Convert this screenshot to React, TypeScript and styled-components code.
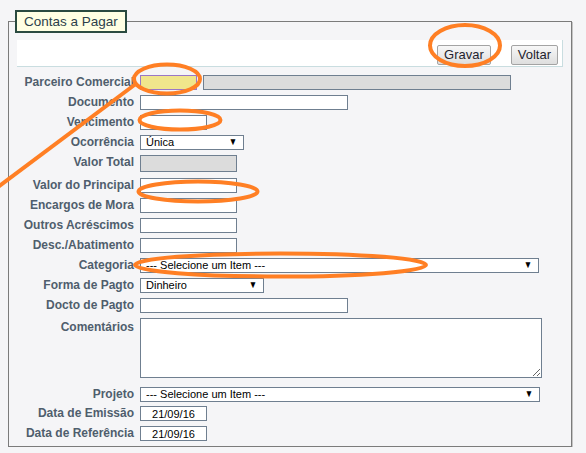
import React from "react";
import styled, { createGlobalStyle } from "styled-components";

const GlobalStyle = createGlobalStyle`
  html, body {
    background: #f5f5f7;
  }
  body {
    margin: 8px;
    font-family: "Liberation Sans", Arial, sans-serif;
  }
`;

interface RowSpec {
  label: string;
  h: number;
  top?: boolean;
  control: React.ReactNode;
}

const Select: React.FC<{ w: number; value: string }> = ({ w, value }) => (
  <SelectWrap $w={w}>
    <SelectBox defaultValue={value}>
      <option>{value}</option>
    </SelectBox>
    <Arrow>▼</Arrow>
  </SelectWrap>
);

export default function App() {
  const rows: RowSpec[] = [
    {
      label: "Parceiro Comercial",
      h: 20,
      control: (
        <Pair>
          <Input $w={57} $tone="focus" />
          <Input $w={308} $tone="gray" readOnly />
        </Pair>
      ),
    },
    { label: "Documento", h: 20, control: <Input $w={208} /> },
    { label: "Vencimento", h: 20, control: <Input $w={67} /> },
    { label: "Ocorrência", h: 20, control: <Select w={104} value="Única" /> },
    { label: "Valor Total", h: 23, control: <Input $w={97} $h={17} $tone="gray" readOnly /> },
    { label: "Valor do Principal", h: 20, control: <Input $w={97} /> },
    { label: "Encargos de Mora", h: 20, control: <Input $w={97} /> },
    { label: "Outros Acréscimos", h: 20, control: <Input $w={97} /> },
    { label: "Desc./Abatimento", h: 20, control: <Input $w={97} /> },
    { label: "Categoria", h: 20, control: <Select w={399} value="--- Selecione um Item ---" /> },
    { label: "Forma de Pagto", h: 20, control: <Select w={124} value="Dinheiro" /> },
    { label: "Docto de Pagto", h: 20, control: <Input $w={208} /> },
    { label: "Comentários", h: 69, top: true, control: <TextArea /> },
    { label: "Projeto", h: 19, control: <Select w={400} value="--- Selecione um Item ---" /> },
    { label: "Data de Emissão", h: 20, control: <DateInput defaultValue="21/09/16" /> },
    { label: "Data de Referência", h: 15, control: <DateInput defaultValue="21/09/16" /> },
  ];

  return (
    <>
      <GlobalStyle />
      <Panel>
        <Legend>Contas a Pagar</Legend>
        <Toolbar>
          <Button>Gravar</Button>
          <Button>Voltar</Button>
        </Toolbar>
        <Form>
          {rows.map((r) => (
            <Row key={r.label} $h={r.h}>
              <Label $top={r.top}>{r.label}</Label>
              {r.control}
            </Row>
          ))}
        </Form>
      </Panel>
      <Marks width="586" height="453" viewBox="0 0 586 453">
        <g fill="none" stroke="#ff7f24" strokeWidth="4">
          <ellipse cx="465" cy="45.5" rx="35" ry="20.5" />
          <ellipse cx="167" cy="79" rx="33" ry="14.5" />
          <ellipse cx="180" cy="120" rx="40.5" ry="9.5" />
          <ellipse cx="198" cy="191.5" rx="59.5" ry="10" />
          <ellipse cx="280.5" cy="265" rx="145.5" ry="11.5" />
          <line x1="-2" y1="187" x2="137" y2="83" />
        </g>
      </Marks>
    </>
  );
}

const Panel = styled.fieldset`
  box-sizing: border-box;
  width: 564px;
  margin: 2px 0 0 0;
  padding: 7px 8px 5px 8px;
  border: 1px solid #7b7b7b;
  box-shadow: 1px 1px 0 #c4c4c4;
  min-inline-size: 0;
`;

const Legend = styled.legend`
  margin-left: -2px;
  padding: 0 7px;
  height: 19px;
  line-height: 19px;
  border: 2px solid #2a4a40;
  background: #ffffe3;
  color: #2b3e4a;
  font-size: 13.5px;
`;

const Toolbar = styled.div`
  display: flex;
  justify-content: flex-end;
  align-items: center;
  gap: 20px;
  height: 26px;
  padding-right: 4px;
  background: #ffffff;
  border-bottom: 1px solid #c9dde0;
  border-right: 1px solid #c9dde0;
`;

const Button = styled.button`
  height: 20px;
  padding: 0 6px;
  margin-top: 3px;
  border: 1px solid #a3a3a3;
  border-radius: 2px;
  background: linear-gradient(#f7f7f7, #dedede);
  color: #1f1f2e;
  font-family: "Liberation Sans", Arial, sans-serif;
  font-size: 13px;
  line-height: 18px;
`;

const Form = styled.div`
  display: flex;
  flex-direction: column;
  margin-top: 8px;
`;

const Row = styled.div<{ $h: number }>`
  display: flex;
  align-items: flex-start;
  gap: 6px;
  height: ${(p) => p.$h}px;
`;

const Label = styled.div<{ $top?: boolean }>`
  width: 117px;
  flex: none;
  text-align: right;
  white-space: nowrap;
  color: #4f5e6d;
  font-size: 12px;
  font-weight: bold;
  line-height: ${(p) => (p.$top ? "16px" : "15px")};
  margin-top: ${(p) => (p.$top ? "1px" : "0")};
`;

const Pair = styled.div`
  display: flex;
  gap: 6px;
`;

const Input = styled.input<{ $w: number; $h?: number; $tone?: "focus" | "gray" }>`
  display: block;
  box-sizing: border-box;
  width: ${(p) => p.$w}px;
  height: ${(p) => p.$h ?? 15}px;
  margin: 0;
  padding: 0 3px;
  border: 1px solid ${(p) => (p.$tone === "focus" ? "#9a78c6" : "#6f7f90")};
  background: ${(p) =>
    p.$tone === "focus" ? "#f0e68c" : p.$tone === "gray" ? "#dcdcdc" : "#ffffff"};
  font-family: "Liberation Sans", Arial, sans-serif;
  font-size: 11px;
  outline: none;
`;

const DateInput = styled.input`
  display: block;
  box-sizing: border-box;
  width: 67px;
  height: 15px;
  margin: 0;
  padding: 0;
  border: 1px solid #6f7f90;
  background: #ffffff;
  text-align: center;
  color: #000;
  font-family: "Liberation Sans", Arial, sans-serif;
  font-size: 11px;
`;

const SelectWrap = styled.div<{ $w: number }>`
  position: relative;
  width: ${(p) => p.$w}px;
  height: 15px;
`;

const SelectBox = styled.select`
  display: block;
  appearance: none;
  box-sizing: border-box;
  width: 100%;
  height: 15px;
  margin: 0;
  padding: 0 0 0 5px;
  border: 1px solid #6f7f90;
  border-radius: 0;
  background: #ffffff;
  color: #000;
  font-family: "Liberation Sans", Arial, sans-serif;
  font-size: 11px;
  line-height: 13px;
`;

const Arrow = styled.span`
  position: absolute;
  right: 6px;
  top: 0;
  font-size: 10px;
  line-height: 14px;
  color: #000;
  transform: scaleX(0.85);
  pointer-events: none;
`;

const TextArea = styled.textarea`
  display: block;
  box-sizing: border-box;
  width: 402px;
  height: 60px;
  margin: 0;
  border: 1px solid #6f7f90;
  background: #ffffff;
`;

const Marks = styled.svg`
  position: fixed;
  top: 0;
  left: 0;
  pointer-events: none;
`;
